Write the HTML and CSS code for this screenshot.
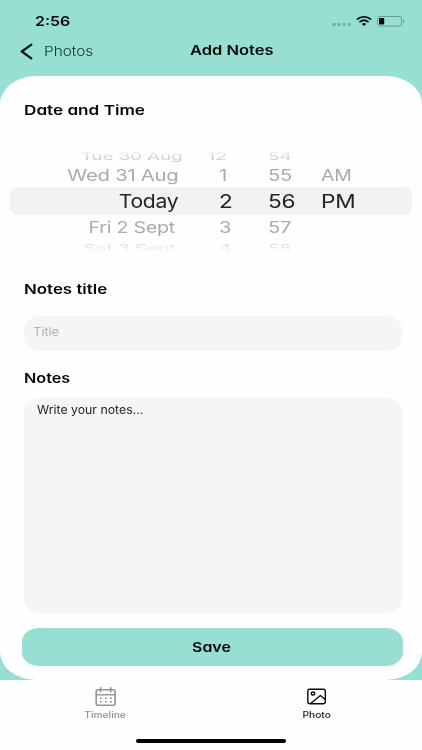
FILE: index.html
```html
<!DOCTYPE html>
<html lang="en">
<head>
<meta charset="utf-8">
<title>Add Notes</title>
<link rel="stylesheet" href="styles.css">
</head>
<body>
<div class="screen">
  <header class="top">
    <div class="status">
      <span class="wide clock">2:56</span>
      <div class="indicators">
        <div class="dots"><i></i><i></i><i></i><i></i></div>
        <svg class="wifi" viewBox="0 0 16 10"><g fill="none" stroke="#071b18" stroke-width="1.8"><path d="M.8 3.5Q8-1.7 15.2 3.5M3.4 6.1Q8 2.5 12.6 6.1"/></g><path d="M8 9.9 5.7 7.9Q8 6.1 10.3 7.9Z" fill="#071b18"/></svg>
        <svg class="battery" viewBox="0 0 28 11"><rect x=".5" y=".5" width="24" height="9.6" rx="2.4" fill="none" stroke="#609d93"/><rect x="2" y="2" width="5.2" height="6.6" rx="1" fill="#000"/><path d="M26 3.6q1.4.4 1.4 1.7T26 7z" fill="#609d93"/></svg>
      </div>
    </div>
    <nav class="nav">
      <a class="back"><svg viewBox="0 0 13 17"><path d="M11.3 1.6 1.8 8.5l9.5 6.9" fill="none" stroke="#071b18" stroke-width="2.3" stroke-linecap="round" stroke-linejoin="round"/></svg><span class="wide">Photos</span></a>
      <h1 class="wide">Add Notes</h1>
    </nav>
  </header>
  <main class="card">
    <h2 class="first"><span class="wide date-time">Date and Time</span></h2>
    <div class="picker">
      <div class="row far above"><span class="date">Tue 30 Aug</span><span class="hour">12</span><span class="minute">54</span></div>
      <div class="row near above"><span class="date">Wed 31 Aug</span><span class="hour">1</span><span class="minute">55</span><span class="half">AM</span></div>
      <div class="row current"><span class="date">Today</span><span class="hour">2</span><span class="minute">56</span><span class="half">PM</span></div>
      <div class="row near below"><span class="date">Fri 2 Sept</span><span class="hour">3</span><span class="minute">57</span></div>
      <div class="row far below"><span class="date">Sat 3 Sept</span><span class="hour">4</span><span class="minute">58</span></div>
    </div>
    <h2><span class="wide notes-title">Notes title</span></h2>
    <div class="field"><span class="wide">Title</span></div>
    <h2><span class="wide notes">Notes</span></h2>
    <div class="field area"><span class="wide">Write your notes...</span></div>
    <button class="save"><span class="wide">Save</span></button>
  </main>
  <footer class="tabs">
    <a class="tab">
      <svg viewBox="0 0 22 20"><g fill="none" stroke="#949494"><rect x="1.2" y="2.7" width="18.9" height="15.5" rx="2" stroke-width="1.6"/><path d="M1 7.8h19.3" stroke-width="1.4"/><path d="M5.7.8v4M15.7.8v4" stroke-width="1.6" stroke-linecap="round"/><path d="M5 11.2h1.8M10 11.2h1.8M15 11.2h1.8M5 14.8h1.8M10 14.8h1.8M15 14.8h1.8" stroke-width="1.6"/></g></svg>
      <span class="wide">Timeline</span>
    </a>
    <a class="tab active">
      <svg viewBox="0 0 22 20"><g fill="none" stroke="#0a0a0a" stroke-width="1.4" stroke-linejoin="round"><rect x="1.8" y="2.2" width="17.5" height="14.6" rx="1.7"/><ellipse cx="7" cy="6.5" rx="1.8" ry="1.5"/><path d="m4.6 16.5 9.8-8 5 4"/></g></svg>
      <span class="wide">Photo</span>
    </a>
  </footer>
  <div class="home"></div>
</div>
</body>
</html>
```
FILE: styles.css
```css
* { box-sizing: border-box; }
body { margin: 0; font-family: Inter, "Liberation Sans", sans-serif; color: #080808; }
.screen { width: 422px; height: 750px; overflow: hidden; background: #97dfd2; display: flex; flex-direction: column; }

/* Extended letterforms with single-storey a */
.wide { display: inline-block; white-space: nowrap; transform: scaleX(var(--sx, 1.2)); transform-origin: left center; font-feature-settings: "cv11"; }

.top { height: 75.5px; flex: none; padding-top: 11px; }
.status { display: flex; justify-content: space-between; height: 20px; padding: 0 17px 0 35px; }
.clock { font-size: 13.4px; font-weight: 600; line-height: 20px; --sx: 1.19; }
.indicators { display: flex; align-items: flex-start; }
.dots { display: flex; gap: 1.7px; margin: 12px 5px 0 0; }
.dots i { width: 3.4px; height: 3px; border-radius: 1px; background: #73b3a8; }
.wifi { width: 16px; height: 10px; margin: 4.7px 5px 0 0; }
.battery { width: 28px; height: 11px; margin-top: 4.5px; }
.nav { display: flex; height: 40px; padding-left: 20px; }
.back { display: flex; width: 170px; gap: 11px; font-size: 13.6px; font-weight: 300; line-height: 40px; color: #10302b; --sx: 1.13; }
.back svg { width: 13px; height: 17px; margin-top: 11.5px; }
h1 { margin: 0; font-size: 13.2px; font-weight: 600; line-height: 39px; --sx: 1.25; }

.card { height: 604.5px; flex: none; background: #fefefe; border-radius: 36px / 28px; padding: 0 20px 0 24px; display: flex; flex-direction: column; }
h2 { margin: 0; flex: none; font-size: 13.5px; font-weight: 600; line-height: 20px; height: 20px; }
h2.first { margin-top: 24.5px; line-height: 21px; }
.date-time { --sx: 1.27; }
.notes-title { --sx: 1.25; }
.notes { --sx: 1.2; }

.picker { margin: 27px -10px 23.5px -14.5px; height: 108px; flex: none; overflow: hidden; -webkit-mask-image: linear-gradient(transparent 2px, #000 14px, #000 92px, transparent 105px); mask-image: linear-gradient(transparent 2px, #000 14px, #000 92px, transparent 105px); }
.row { display: grid; grid-template-columns: 168.5px 40.5px 49px 53.5px 1fr; white-space: nowrap; letter-spacing: -.2px; }
.row span { transform: scale(var(--sx), var(--sy, 1)); transform-origin: left center; }
.row .date { text-align: right; transform-origin: right center; margin-right: var(--inset, 0); }
.row .hour, .row .minute, .row .half { justify-self: end; width: 0; }
.far { height: 16px; line-height: 17px; font-size: 14px; color: #c4c4c4; --sx: 1.37; --sy: .76; }
.far.above .date { --inset: -4px; }
.far.above .hour { margin-right: 11.5px; --sx: 1.47; }
.far.below .date { --inset: 3px; --sx: 1.39; }
.near { height: 24px; line-height: 25.5px; font-size: 15.6px; color: #ababab; --sx: 1.3; }
.current { height: 28px; line-height: 29px; font-size: 19.2px; color: #242426; background: #f2f2f4; border-radius: 8px / 7px; --sx: 1.18; }
.current .date { --sx: 1.1; }
.near.below { height: 25px; line-height: 25.5px; }
.near.below .date { --inset: 3.5px; --sx: 1.26; }
.near .half { --sx: 1.25; }
.far.below { height: 15px; line-height: 15px; }

.field { flex: none; height: 35px; margin: 17px 0; width: 377.5px; padding-left: 9px; background: #f5f5f8; border-radius: 17px / 14px; font-size: 11.8px; font-weight: 300; line-height: 33px; color: #a4a4a4; --sx: 1.12; }
.area { height: 215.5px; margin: 10px 0 15px; padding: 0 13px; font-size: 11.4px; font-weight: 400; line-height: 24px; color: #1b1b1b; --sx: 1.08; }
.save { flex: none; display: block; width: 381px; height: 38px; margin: 0 0 0 -2.3px; padding: 0; border: 0; border-radius: 17px / 14px; background: #97dfd2; font: 600 13.5px/37px Inter, "Liberation Sans", sans-serif; color: #080808; --sx: 1.18; }
.save .wide { transform-origin: center; margin-left: -1px; }

.tabs { height: 59px; flex: none; display: grid; grid-template-columns: 1fr 1fr; background: #fefefe; }
.tab { display: flex; flex-direction: column; align-items: center; padding-top: 6.5px; font-size: 8.4px; font-weight: 500; line-height: 12px; color: #8e8e8e; --sx: 1.22; }
.tab .wide { transform-origin: center; }
.tab svg { width: 22px; height: 20px; margin-bottom: 2.5px; }
.tab.active { color: #161616; }
.home { flex: 1; background: #fefefe; }
.home::before { content: ""; display: block; width: 150px; height: 4px; margin: 0 auto; border-radius: 2px; background: #000; }
```
